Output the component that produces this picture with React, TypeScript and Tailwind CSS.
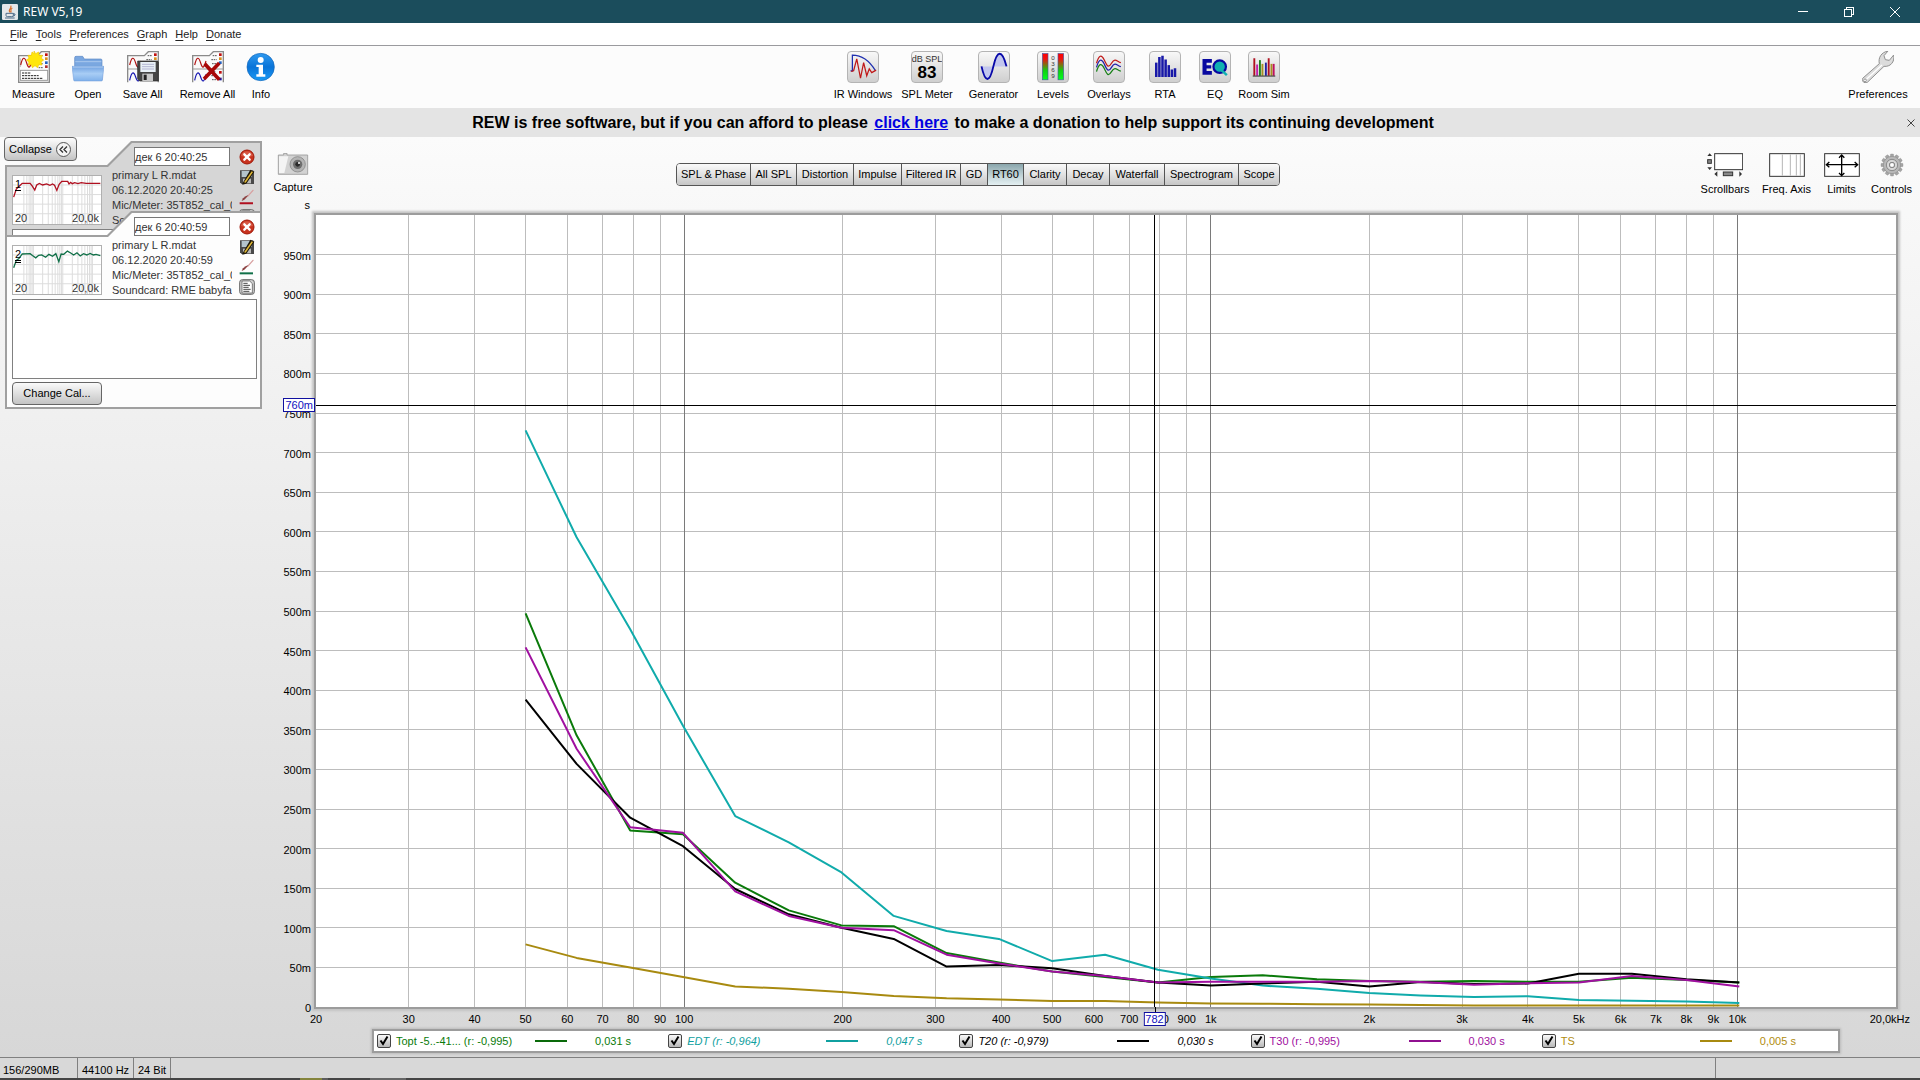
import React from "react";

const X_MIN = Math.log10(20);
const xPct = (f: number) => ((Math.log10(f) - X_MIN) / 3) * 100;
const yPct = (ms: number) => 100 - ms / 10;
const px = (f: number) => xPct(f) * 15.8;
const py = (ms: number) => yPct(ms) * 7.92;
const snap = (v: number) => Math.floor(v) + 0.5;

const FREQS = [
  50, 62.5, 79, 99.5, 125, 158, 199, 250, 315, 396, 500, 630, 794, 1000, 1255, 1590, 2000, 2500, 3160, 4000, 5000, 6300,
  8000, 10080,
];

const SERIES = [
  {
    color: "#a88a10",
    data: [79, 62, 50, 38, 26, 23, 19, 14, 11, 9.5, 7.5, 7.5, 5.5, 4.5, 4, 3.5, 3, 2.5, 2, 2, 2, 2, 2, 2],
  },
  {
    color: "#0a7a0a",
    data: [497, 343, 223, 218, 157, 122, 103, 102, 68, 56, 45, 38, 31, 38, 40, 35, 33, 32, 33, 32, 32, 37, 34, 31],
  },
  {
    color: "#10abab",
    data: [728, 593, 477, 355, 241, 208, 170, 115, 96, 86, 58, 66, 47, 36, 27, 23, 17.5, 14.5, 12.5, 13.5, 9, 8, 7, 5],
  },
  {
    color: "#000000",
    data: [388, 307, 239, 203, 149, 117, 100, 86, 51, 53, 49, 39, 31, 27, 29.5, 32, 26, 31.5, 29, 29.5, 42, 42, 35, 31],
  },
  {
    color: "#a010a0",
    data: [454, 326, 227, 220, 146, 115, 100, 97, 66, 55, 45, 39, 31, 32, 32, 32, 33, 31.5, 28, 30, 31, 39, 34, 26],
  },
];

const X_TICKS: [number, string][] = [
  [20, "20"], [30, "30"], [40, "40"], [50, "50"], [60, "60"], [70, "70"], [80, "80"], [90, "90"], [100, "100"],
  [200, "200"], [300, "300"], [400, "400"], [500, "500"], [600, "600"], [700, "700"], [800, "800"], [900, "900"],
  [1000, "1k"], [2000, "2k"], [3000, "3k"], [4000, "4k"], [5000, "5k"], [6000, "6k"], [7000, "7k"], [8000, "8k"],
  [9000, "9k"], [10000, "10k"],
];

const Y_TICKS = Array.from({ length: 20 }, (_, i) => i * 50);
const CURSOR_X = 782;
const CURSOR_Y = 760;

/* ---------- toolbar icons ---------- */

function MeasureSheet() {
  return (
    <>
      <path d="M2 14H58L70 2H94V94H2Z" fill="#fafafa" stroke="#8a8a8a" strokeWidth="4" />
      <path d="M7 48V22" stroke="#999" strokeWidth="2" />
      <path d="M8 42C14 16 20 16 26 36S36 50 42 30" fill="none" stroke="#b01010" strokeWidth="3.5" />
      <path d="M64 14h10M62 26h14M62 38h12M62 50h13" stroke="#333" strokeWidth="2.5" strokeDasharray="5 2" />
      <rect x="81" y="7" width="8" height="8" fill="#c01010" />
      <rect x="81" y="19" width="8" height="8" fill="#d89020" />
      <rect x="81" y="31" width="8" height="8" fill="#2060c0" />
      <rect x="81" y="43" width="8" height="8" fill="#b03030" />
    </>
  );
}

function MeasureIcon() {
  return (
    <svg viewBox="0 0 96 96" className="size-8">
      <MeasureSheet />
      <rect x="7" y="58" width="82" height="30" fill="#fff" stroke="#999" strokeWidth="3" />
      <path d="M12 66h26M12 74h50M12 82h62" stroke="#222" strokeWidth="3" strokeDasharray="7 2" />
      <path
        d="M48 0l5 8 9-5 1 10 10 0-3 9 7 5-8 6 3 9-10-1-3 9-8-6-8 6-3-9-9 1 2-9-8-6 8-5-3-9h10l2-10 8 5z"
        fill="#ffe60a"
        stroke="#f2c800"
        strokeWidth="2"
      />
    </svg>
  );
}

function OpenIcon() {
  return (
    <svg viewBox="0 0 96 96" className="size-8">
      <defs>
        <linearGradient id="folderFront" x1="0" y1="0" x2="0" y2="1">
          <stop offset="0" stopColor="#6fa0e0" />
          <stop offset="0.5" stopColor="#a8cdf5" />
          <stop offset="1" stopColor="#7fb0ea" />
        </linearGradient>
      </defs>
      <path d="M8 88V20Q8 16 12 16H32L37 24H86Q90 24 90 28V88Z" fill="#7aa7e0" stroke="#5c88c4" strokeWidth="2" />
      <path d="M10 32H88" stroke="#a9c8ee" strokeWidth="3" />
      <path d="M0 46H96L91 88Q91 90 88 90H8Q5 90 5 87Z" fill="url(#folderFront)" stroke="#6c98d8" strokeWidth="1.5" />
      <path d="M2 48H94" stroke="#d6e8fc" strokeWidth="2" />
    </svg>
  );
}

function DoubleSheet() {
  return (
    <>
      <path d="M2 94V14H52L64 2H94V94" fill="#fafafa" stroke="#8a8a8a" strokeWidth="4" />
      <path d="M2 54H94" stroke="#999" strokeWidth="3" />
      <path d="M8 42C14 16 20 16 26 36S36 50 42 30" fill="none" stroke="#b01010" strokeWidth="3.5" />
      <path d="M8 88C14 60 20 60 26 78S36 94 42 70" fill="none" stroke="#1515b0" strokeWidth="3.5" />
      <path d="M62 14h12M58 26h16M60 38h14M58 62h14M58 74h14M60 86h12" stroke="#333" strokeWidth="2.5" strokeDasharray="5 2" />
      <rect x="81" y="7" width="8" height="8" fill="#c01010" />
      <rect x="81" y="19" width="8" height="8" fill="#d89020" />
      <rect x="81" y="31" width="8" height="8" fill="#2060c0" />
      <rect x="81" y="60" width="8" height="8" fill="#c01010" />
      <rect x="81" y="80" width="8" height="8" fill="#1515a0" />
    </>
  );
}

function SaveAllIcon() {
  return (
    <svg viewBox="0 0 96 96" className="size-8">
      <DoubleSheet />
      <path d="M32 30H92L94 34V90H38L32 84Z" fill="#454545" stroke="#222" strokeWidth="2" />
      <rect x="40" y="33" width="46" height="30" fill="#e8f0f6" />
      <path d="M45 40h36M45 47h36M45 54h36" stroke="#aac" strokeWidth="2.5" />
      <rect x="46" y="68" width="32" height="22" fill="#c9c9c9" />
      <rect x="50" y="71" width="9" height="16" fill="#222" />
    </svg>
  );
}

function RemoveAllIcon() {
  return (
    <svg viewBox="0 0 96 96" className="size-8">
      <DoubleSheet />
      <path d="M38 38L82 86M82 36L36 84" stroke="#a80808" strokeWidth="11" />
    </svg>
  );
}

function InfoIcon() {
  return (
    <svg viewBox="0 0 96 96" className="size-8">
      <defs>
        <linearGradient id="infoBall" x1="0" y1="0" x2="0" y2="1">
          <stop offset="0" stopColor="#2f9af0" />
          <stop offset="0.5" stopColor="#0a74d8" />
          <stop offset="1" stopColor="#1a9af5" />
        </linearGradient>
      </defs>
      <circle cx="47" cy="48" r="41" fill="url(#infoBall)" stroke="#1766b8" strokeWidth="2" />
      <circle cx="47" cy="27" r="9" fill="#fff" />
      <path d="M34 41H54V70H61V77H34V70H41V48H34Z" fill="#fff" />
    </svg>
  );
}

function Tile({ children }: { children: React.ReactNode }) {
  return (
    <span className="flex size-8 shrink-0 flex-col items-center justify-center overflow-hidden rounded-[4px] border border-[#b4b4b4] bg-linear-to-b from-[#f8f8f8] to-[#cfcfcf]">
      {children}
    </span>
  );
}

function IrIcon() {
  return (
    <Tile>
      <svg viewBox="0 0 96 96" className="size-full">
        <path d="M8 60H14V10Q58 10 88 60" fill="none" stroke="#2030b0" strokeWidth="4" />
        <path d="M10 62L18 60L28 22L40 84L50 34L60 76L68 54L76 66L90 58" fill="none" stroke="#c01818" strokeWidth="4" />
      </svg>
    </Tile>
  );
}

function SplIcon() {
  return (
    <Tile>
      <span className="text-[9px] leading-3 whitespace-nowrap text-[#333]">dB SPL</span>
      <span className="text-[17px] leading-4 font-bold text-black">83</span>
    </Tile>
  );
}

function GeneratorIcon() {
  return (
    <Tile>
      <svg viewBox="0 0 96 96" className="size-full">
        <path d="M8 46C20 96 34 98 44 46ZM44 46C58 -6 76 -6 88 46Z" fill="#c2c6ee" />
        <path d="M8 46C20 100 34 100 46 46S74 -8 88 46" fill="none" stroke="#0808a8" strokeWidth="6" />
      </svg>
    </Tile>
  );
}

function LevelsIcon() {
  return (
    <Tile>
      <svg viewBox="0 0 96 96" className="size-full">
        <defs>
          <linearGradient id="meter" x1="0" y1="0" x2="0" y2="1">
            <stop offset="0" stopColor="#ff0000" />
            <stop offset="0.2" stopColor="#f01010" />
            <stop offset="0.65" stopColor="#10d010" />
            <stop offset="1" stopColor="#00ff20" />
          </linearGradient>
        </defs>
        <rect x="14" y="5" width="18" height="84" fill="url(#meter)" stroke="#4858a0" strokeWidth="2" />
        <rect x="64" y="5" width="18" height="84" fill="url(#meter)" stroke="#4858a0" strokeWidth="2" />
        <g fontFamily="Liberation Sans, sans-serif" fontSize="20" fill="#333" textAnchor="middle">
          <text x="48" y="24">0</text>
          <text x="48" y="44">3</text>
          <text x="48" y="64">6</text>
          <text x="48" y="84">9</text>
        </g>
      </svg>
    </Tile>
  );
}

function OverlaysIcon() {
  const wave = "M8 36C16 8 24 8 32 24S44 56 56 36S74 32 86 34";
  return (
    <Tile>
      <svg viewBox="0 0 96 96" className="size-full" fill="none" strokeWidth="4">
        <path d={wave} stroke="#c01818" />
        <path d={wave} stroke="#2020a8" transform="translate(0 13)" />
        <path d={wave} stroke="#188018" transform="translate(0 27)" />
      </svg>
    </Tile>
  );
}

function RtaIcon() {
  const bars = [[16, 34], [26, 16], [36, 12], [46, 24], [56, 42], [66, 56], [76, 52]];
  return (
    <Tile>
      <svg viewBox="0 0 96 96" className="size-full">
        {bars.map(([x, y]) => (
          <rect key={x} x={x} y={y} width="8" height={80 - y} fill="#1818a8" />
        ))}
      </svg>
    </Tile>
  );
}

function EqIcon() {
  return (
    <Tile>
      <svg viewBox="0 0 96 96" className="size-full">
        <path d="M8 22H38V34H21V42H36V53H21V61H38V73H8Z" fill="#0808a0" />
        <circle cx="63" cy="47" r="20" fill="#10b0b0" stroke="#0808a0" strokeWidth="7" />
        <path d="M64 54L86 74" stroke="#10b0b0" strokeWidth="8" />
      </svg>
    </Tile>
  );
}

function RoomIcon() {
  const bars: [number, number, string][] = [
    [14, 20, "#b01020"], [23, 40, "#c020b0"], [32, 26, "#208020"], [40, 38, "#a89020"],
    [51, 34, "#2020a0"], [60, 20, "#b01020"], [69, 38, "#a89020"], [76, 38, "#c01060"],
  ];
  return (
    <Tile>
      <svg viewBox="0 0 96 96" className="size-full">
        {bars.map(([x, y, c]) => (
          <rect key={x} x={x} y={y} width="6" height={76 - y} fill={c} />
        ))}
        <path d="M12 77H84" stroke="#222" strokeWidth="3" />
      </svg>
    </Tile>
  );
}

function WrenchIcon() {
  return (
    <svg viewBox="0 0 96 96" className="size-8">
      <path
        d="M2 82L52 38C48 20 58 4 78 0L66 14L70 26L82 28L95 12C99 34 84 48 66 46L16 94C6 98 -2 90 2 82Z"
        fill="#dcdcdc"
        stroke="#909090"
        strokeWidth="3"
      />
      <path d="M14 84L60 42" stroke="#fff" strokeWidth="4" />
      <circle cx="9" cy="88" r="4" fill="#fff" stroke="#777" strokeWidth="2" />
    </svg>
  );
}

function Tool({ label, icon, width }: { label: string; icon: React.ReactNode; width: string }) {
  return (
    <button type="button" className={`flex shrink-0 flex-col items-center gap-[3px] ${width}`}>
      <span className="flex h-8 justify-center">{icon}</span>
      <span className="text-[11px] leading-4 whitespace-nowrap">{label}</span>
    </button>
  );
}

/* ---------- measurement cards ---------- */

const TRACE_1 =
  "M2 66L10 41L18 33L28 23H52L58 31L66 44L72 28L80 23L90 28L102 25L112 29L120 25L126 29L133 45L140 26L148 17H166L170 25L175 20L180 24L187 21L197 24L207 21L222 23H265";
const TRACE_2 =
  "M2 68L10 45L18 39L28 25L52 24L59 30L69 37L78 29L87 28L99 35L109 26L120 32L130 24L139 49L146 25L154 26L165 16L175 22L184 28L194 21L204 31L214 24L224 28L234 23L244 28L252 26L265 30";
const THUMB_V = [33, 42, 49, 54, 58, 62, 90, 107, 119, 128, 136, 142, 147, 151, 180, 197, 209, 218, 226, 232, 237, 241];

function Thumb({ num, color, path }: { num: number; color: string; path: string }) {
  return (
    <div className="relative h-[50px] w-[90px] shrink-0 border border-[#b0b0b0] bg-white text-[11px] leading-3">
      <svg viewBox="0 0 267 150" preserveAspectRatio="none" className="size-full">
        {THUMB_V.map((x) => (
          <path key={x} d={`M${x} 0V150`} stroke="#dcdcdc" strokeWidth="3" />
        ))}
        {[28, 58, 88, 118].map((y) => (
          <path key={y} d={`M0 ${y}H267`} stroke="#dcdcdc" strokeWidth="3" />
        ))}
        <path d={path} fill="none" stroke={color} strokeWidth="4" />
      </svg>
      <span className={`absolute top-0.5 left-0.5 border-black ${num === 2 ? "border-b-3 border-double" : "border-b"}`}>
        {num}
      </span>
      <span className="absolute bottom-0 left-0.5 text-[#333]">20</span>
      <span className="absolute right-0.5 bottom-0 text-[#333]">20,0k</span>
    </div>
  );
}

function CloseBall() {
  return (
    <svg viewBox="0 0 48 48" className="size-4">
      <circle cx="24" cy="24" r="21" fill="#c8321e" stroke="#a01808" strokeWidth="3" />
      <path d="M6 20A19 19 0 0 1 42 20Q24 28 6 20Z" fill="#e0705c" opacity="0.6" />
      <path d="M16 16L32 32M32 16L16 32" stroke="#fff" strokeWidth="7" strokeLinecap="round" />
    </svg>
  );
}

function SavePen() {
  return (
    <svg viewBox="0 0 48 48" className="size-4">
      <path d="M3 4H42L45 8V45H8L3 40Z" fill="#4a4a4a" />
      <rect x="8" y="6" width="30" height="18" fill="#b4c4cc" />
      <rect x="12" y="29" width="24" height="14" fill="#bbb" />
      <path d="M10 44L34 2L46 8L22 44L10 47Z" fill="#1e1808" />
      <path d="M15 40L38 7L42 9L20 41Z" fill="#e0b838" />
    </svg>
  );
}

function Brush({ color }: { color: string }) {
  return (
    <svg viewBox="0 0 48 48" className="size-4">
      <path d="M42 4L26 22" stroke="#d8a0a0" strokeWidth="4" strokeLinecap="round" />
      <path d="M28 18L22 26L16 32L8 36L12 28L20 22Z" fill="#8a4040" />
      <path d="M2 43H42" stroke={color} strokeWidth="6" />
    </svg>
  );
}

function Notes() {
  return (
    <svg viewBox="0 0 48 48" className="size-4">
      <rect x="2" y="2" width="44" height="44" rx="8" fill="#d0d0d0" stroke="#666" strokeWidth="3" />
      <path d="M9 6H32L40 14V42H9Z" fill="#fff" stroke="#444" strokeWidth="2" />
      <path d="M13 13h13M13 19h20M13 25h16M13 31h22M13 37h18" stroke="#222" strokeWidth="2.5" />
    </svg>
  );
}

type CardProps = { num: number; name: string; date: string; color: string; path: string; active: boolean };

function MeasurementCard({ num, name, date, color, path, active }: CardProps) {
  return (
    <article
      className={`bg-[#a0a0a0] p-0.5 [clip-path:polygon(0_24px,102px_24px,126px_0,100%_0,100%_100%,0_100%)] ${
        active ? "-mt-6" : "h-[94px] overflow-hidden"
      }`}
    >
      <div
        className={`px-[5px] pt-1 pb-0.5 [clip-path:polygon(0_24px,101px_24px,125px_0,100%_0,100%_100%,0_100%)] ${
          active ? "bg-[#fdfdfd]" : "bg-[#d6d6d6]"
        }`}
      >
        <div className="flex items-start">
          <div className="pt-7">
            <Thumb num={num} color={color} path={path} />
          </div>
          <div className="ml-2.5 flex w-[120px] flex-col overflow-hidden text-[11px] leading-[15px] whitespace-nowrap text-[#333]">
            <input
              aria-label={`Measurement ${num} name`}
              defaultValue={name}
              className="mb-0.5 ml-[22px] h-[19px] w-24 border border-[#777] bg-white text-[11px] text-[#333]"
            />
            <span>primary L R.mdat</span>
            <span>{date}</span>
            <span>Mic/Meter: 35T852_cal_0</span>
            <span>Soundcard: RME babyfa</span>
          </div>
          <div className="ml-[7px] flex flex-col gap-1 pt-0.5">
            <button type="button" aria-label="Delete"><CloseBall /></button>
            <button type="button" aria-label="Save"><SavePen /></button>
            <button type="button" aria-label="Trace colour"><Brush color={color} /></button>
            <button type="button" aria-label="Notes"><Notes /></button>
          </div>
        </div>
        <textarea
          aria-label={`Notes ${num}`}
          className="mt-px block h-20 w-[245px] resize-none border border-[#808080] bg-white"
        />
        <button
          type="button"
          className="mt-[3px] h-[23px] w-[90px] rounded-[4px] border border-[#666] bg-linear-to-b from-[#fafafa] to-[#c4c4c4] text-[11px]"
        >
          Change Cal...
        </button>
      </div>
    </article>
  );
}

/* ---------- graph controls ---------- */

const TABS: [string, string][] = [
  ["SPL & Phase", "w-[73px]"], ["All SPL", "w-[46px]"], ["Distortion", "w-[57px]"], ["Impulse", "w-12"],
  ["Filtered IR", "w-[59px]"], ["GD", "w-[27px]"], ["RT60", "w-9"], ["Clarity", "w-[43px]"], ["Decay", "w-[43px]"],
  ["Waterfall", "w-[55px]"], ["Spectrogram", "w-[74px]"], ["Scope", "w-[41px]"],
];

function CaptureIcon() {
  return (
    <svg viewBox="0 0 96 66" className="h-[22px] w-8">
      <path d="M4 6H20V1H30V6H92V64H4Z" fill="#d2d2d2" stroke="#999" strokeWidth="2.5" />
      <path d="M6 10H34L22 60H6Z" fill="#f4f4f4" />
      <circle cx="62" cy="34" r="23" fill="#b4b4b4" stroke="#888" strokeWidth="2.5" />
      <circle cx="62" cy="34" r="14" fill="#6e6e6e" />
      <circle cx="62" cy="34" r="7" fill="#2a2a2a" />
      <circle cx="66" cy="30" r="3" fill="#fff" />
    </svg>
  );
}

function ScrollbarsIcon() {
  return (
    <svg viewBox="0 0 108 72" className="h-6 w-9">
      <rect x="23" y="2" width="84" height="48" fill="#fff" stroke="#333" strokeWidth="3" />
      <path d="M8 1L15 9H1ZM8 51L15 43H1ZM22 63L31 55V71ZM105 63L97 55V71Z" fill="#333" />
      <rect x="2" y="20" width="11" height="11" fill="#888" stroke="#333" strokeWidth="3" />
      <rect x="49" y="57" width="28" height="11" fill="#888" stroke="#333" strokeWidth="3" />
    </svg>
  );
}

function FreqAxisIcon() {
  return (
    <svg viewBox="0 0 108 72" className="h-6 w-9">
      <rect x="2" y="2" width="104" height="68" fill="#fff" stroke="#333" strokeWidth="3" />
      <path d="M40 4V68M64 4V68M82 4V68M94 4V68" stroke="#b5b5b5" strokeWidth="3" />
    </svg>
  );
}

function LimitsIcon() {
  return (
    <svg viewBox="0 0 108 72" className="h-6 w-9">
      <rect x="2" y="2" width="104" height="68" fill="#fff" stroke="#333" strokeWidth="3" />
      <path
        d="M8 35H100M53 8V66M16 27L7 35L16 43M92 27L101 35L92 43M45 14L53 6L61 14M45 60L53 68L61 60"
        fill="none"
        stroke="#000"
        strokeWidth="4"
      />
    </svg>
  );
}

function GearIcon() {
  return (
    <svg viewBox="0 0 72 72" className="size-6">
      {Array.from({ length: 12 }, (_, i) => (
        <rect key={i} x="31" y="3" width="10" height="14" rx="2" fill="#a5a5a5" stroke="#888" transform={`rotate(${i * 30} 36 36)`} />
      ))}
      <circle cx="36" cy="36" r="26" fill="#b8b8b8" stroke="#8c8c8c" strokeWidth="2" />
      <circle cx="36" cy="36" r="17" fill="#d6d6d6" stroke="#8a8a8a" strokeWidth="3" />
      <rect x="29" y="29" width="14" height="14" rx="4" fill="#fff" stroke="#777" strokeWidth="3" />
    </svg>
  );
}

function GraphTool({ label, icon, width }: { label: string; icon: React.ReactNode; width: string }) {
  return (
    <button type="button" className={`flex flex-col items-center gap-1 ${width}`}>
      {icon}
      <span className="text-[11px] leading-4 whitespace-nowrap">{label}</span>
    </button>
  );
}

/* ---------- plot ---------- */

function Plot() {
  return (
    <svg viewBox="0 0 1580 792" preserveAspectRatio="none" className="absolute inset-0 size-full bg-white">
      <g shapeRendering="crispEdges">
        {Y_TICKS.slice(1).map((t) => (
          <line key={t} x1="0" x2="1580" y1={snap(py(t))} y2={snap(py(t))} stroke="#bdbdbd" />
        ))}
        {X_TICKS.slice(1).map(([f]) => (
          <line
            key={f}
            x1={snap(px(f))}
            x2={snap(px(f))}
            y1="0"
            y2="792"
            stroke={f === 100 || f === 1000 || f === 10000 ? "#7a7a7a" : "#bdbdbd"}
          />
        ))}
      </g>
      {SERIES.map((s) => (
        <polyline
          key={s.color}
          points={s.data.map((v, i) => `${px(FREQS[i]).toFixed(1)},${py(v).toFixed(1)}`).join(" ")}
          fill="none"
          stroke={s.color}
          strokeWidth="2"
          strokeLinejoin="round"
        />
      ))}
      <g shapeRendering="crispEdges" stroke="#000">
        <line x1="0" x2="1580" y1={snap(py(CURSOR_Y))} y2={snap(py(CURSOR_Y))} />
        <line x1={snap(px(CURSOR_X))} x2={snap(px(CURSOR_X))} y1="0" y2="792" />
      </g>
    </svg>
  );
}

const LEGEND = [
  { label: "Topt -5..-41... (r: -0,995)", value: "0,031 s", text: "text-[#0a7a0a]", line: "bg-[#0a6a0a]" },
  { label: "EDT (r: -0,964)", value: "0,047 s", text: "text-[#10a0a0] italic", line: "bg-[#10a0a0]" },
  { label: "T20 (r: -0,979)", value: "0,030 s", text: "text-black italic", line: "bg-black" },
  { label: "T30 (r: -0,995)", value: "0,030 s", text: "text-[#a010a0]", line: "bg-[#901090]" },
  { label: "TS", value: "0,005 s", text: "text-[#b08c10]", line: "bg-[#a88a10]" },
];

function Legend() {
  return (
    <div className="mx-[58px] grid h-5 grid-cols-5 bg-white pr-2 text-[11px] shadow-[0_0_0_2px_#9c9c9c,0_0_2px_3px_#bcbcbc]">
      {LEGEND.map((l, i) => (
        <div key={i} className={`flex items-center pl-[3px] whitespace-nowrap ${l.text}`}>
          <label className="flex w-[158px] items-center gap-[5px]">
            <span className="grid size-3.5 shrink-0 place-items-center">
              <input
                type="checkbox"
                defaultChecked
                className="peer col-start-1 row-start-1 size-3.5 appearance-none rounded-[2px] border border-[#444] bg-linear-to-b from-[#fafafa] to-[#b8b8b8]"
              />
              <svg viewBox="0 0 14 14" className="pointer-events-none invisible col-start-1 row-start-1 size-3.5 peer-checked:visible">
                <path d="M3.5 6.5L6 10L10.5 2.5" fill="none" stroke="#000" strokeWidth="2" />
              </svg>
            </span>
            {l.label}
          </label>
          <span className={`h-0.5 w-8 ${l.line}`} />
          <span className="ml-7">{l.value}</span>
        </div>
      ))}
    </div>
  );
}

export default function App() {
  return (
    <div className="flex h-screen flex-col overflow-hidden font-['Liberation_Sans',Arial,sans-serif] text-black">
      <header className="flex h-[23px] shrink-0 items-center bg-[#1b4d5c] pr-0.5 font-['Noto_Sans',sans-serif] text-white">
        <svg viewBox="0 0 48 48" className="ml-0.5 size-4">
          <rect x="0" y="0" width="48" height="48" rx="4" fill="#e4e8ea" />
          <path d="M26 5C32 13 16 15 24 25M31 12C22 17 30 20 26 26" fill="none" stroke="#d8702c" strokeWidth="3.5" />
          <path d="M12 28H34V34Q34 38 29 38H17Q12 38 12 34ZM34 29Q41 29 39 33T33 36M9 42H38" fill="none" stroke="#4c6c88" strokeWidth="3" />
        </svg>
        <h1 className="ml-[5px] text-[12px] leading-4">REW V5,19</h1>
        <div className="ml-auto flex">
          <button type="button" aria-label="Minimize" className="grid h-5 w-[46px] place-items-center">
            <span className="h-px w-2.5 bg-white" />
          </button>
          <button type="button" aria-label="Restore" className="grid h-5 w-[46px] place-items-center">
            <svg viewBox="0 0 10 10" className="size-2.5" fill="none" stroke="#fff" shapeRendering="crispEdges">
              <path d="M.5 2.5H7.5V9.5H.5ZM2.5 2.5V.5H9.5V7.5H7.5" />
            </svg>
          </button>
          <button type="button" aria-label="Close" className="grid h-5 w-[46px] place-items-center">
            <svg viewBox="0 0 10 10" className="size-2.5" stroke="#fff">
              <path d="M0 0L10 10M10 0L0 10" />
            </svg>
          </button>
        </div>
      </header>

      <nav className="flex h-[23px] shrink-0 items-center gap-2 border-b border-[#9a9a9e] bg-white pl-2.5 text-[11px] text-[#222]">
        {["File", "Tools", "Preferences", "Graph", "Help", "Donate"].map((m) => (
          <button type="button" key={m}>
            <span className="underline underline-offset-2">{m[0]}</span>
            {m.slice(1)}
          </button>
        ))}
      </nav>

      <div className="flex h-[62px] shrink-0 items-start justify-between bg-[#fcfcfc] pt-[5px] pr-3 pl-2.5">
        <div className="flex">
          <Tool label="Measure" icon={<MeasureIcon />} width="w-[47px]" />
          <Tool label="Open" icon={<OpenIcon />} width="w-[62px]" />
          <Tool label="Save All" icon={<SaveAllIcon />} width="w-[47px]" />
          <Tool label="Remove All" icon={<RemoveAllIcon />} width="w-[83px]" />
          <Tool label="Info" icon={<InfoIcon />} width="w-6" />
        </div>
        <div className="flex">
          <Tool label="IR Windows" icon={<IrIcon />} width="w-[62px]" />
          <Tool label="SPL Meter" icon={<SplIcon />} width="w-[66px]" />
          <Tool label="Generator" icon={<GeneratorIcon />} width="w-[67px]" />
          <Tool label="Levels" icon={<LevelsIcon />} width="w-[52px]" />
          <Tool label="Overlays" icon={<OverlaysIcon />} width="w-[60px]" />
          <Tool label="RTA" icon={<RtaIcon />} width="w-[52px]" />
          <Tool label="EQ" icon={<EqIcon />} width="w-12" />
          <Tool label="Room Sim" icon={<RoomIcon />} width="w-[50px]" />
        </div>
        <Tool label="Preferences" icon={<WrenchIcon />} width="w-[60px]" />
      </div>

      <div className="flex h-[29px] shrink-0 items-center bg-[#e4e4e4] pr-1">
        <p className="flex-1 pt-px text-center text-[16px] leading-5 font-bold">
          REW is free software, but if you can afford to please{" "}
          <a href="#donate" className="mx-0.5 text-[#0000e0] underline">click here</a>{" "}
          to make a donation to help support its continuing development
        </p>
        <button type="button" aria-label="Dismiss" className="p-px">
          <svg viewBox="0 0 8 8" className="size-2" stroke="#444">
            <path d="M.5 .5L7.5 7.5M7.5 .5L.5 7.5" />
          </svg>
        </button>
      </div>

      <main className="flex min-h-0 flex-1 bg-linear-to-b from-[#fbfbfb] to-[#d7d7d7]">
        <aside className="w-[262px] shrink-0">
          <div className="-mb-5 pl-1">
            <button
              type="button"
              className="flex h-6 w-[73px] items-center justify-between rounded-[4px] border border-[#666] bg-linear-to-b from-[#fdfdfd] to-[#c4c4c4] pr-[5px] pl-1 text-[11px]"
            >
              Collapse
              <svg viewBox="0 0 15 15" className="size-[15px]" fill="none" stroke="#333">
                <circle cx="7.5" cy="7.5" r="7" fill="#f4f4f4" stroke="#555" />
                <path d="M7 4.5L4 7.5L7 10.5M11 4.5L8 7.5L11 10.5" strokeWidth="1.3" />
              </svg>
            </button>
          </div>
          <div className="ml-[5px]">
            <MeasurementCard num={1} name="дек 6 20:40:25" date="06.12.2020 20:40:25" color="#b01020" path={TRACE_1} active={false} />
            <MeasurementCard num={2} name="дек 6 20:40:59" date="06.12.2020 20:40:59" color="#107048" path={TRACE_2} active />
          </div>
        </aside>

        <section className="flex min-w-0 flex-1 flex-col pb-[5px]">
          <div className="flex h-[78px] shrink-0 items-start">
            <div className="pt-4">
              <GraphTool label="Capture" icon={<CaptureIcon />} width="w-[62px]" />
              <p className="pr-[14px] text-right text-[11px] leading-5">s</p>
            </div>
            <div className="flex flex-1 justify-center pt-[26px] pr-[62px]">
              <div className="flex h-[23px] overflow-hidden rounded-[4px] border border-[#555] text-[11px]">
                {TABS.map(([t, w]) => (
                  <button
                    type="button"
                    key={t}
                    className={`shrink-0 border-l border-[#555] whitespace-nowrap first:border-l-0 ${w} ${
                      t === "RT60"
                        ? "bg-linear-to-b from-[#8aa6ac] via-[#bccfd3] to-[#e4f0f2]"
                        : "bg-linear-to-b from-[#fafafa] via-[#e2e2e2] to-[#c6c6c6]"
                    }`}
                  >
                    {t}
                  </button>
                ))}
              </div>
            </div>
            <div className="flex pt-4 pr-[3px]">
              <GraphTool label="Scrollbars" icon={<ScrollbarsIcon />} width="w-[62px]" />
              <GraphTool label="Freq. Axis" icon={<FreqAxisIcon />} width="w-[61px]" />
              <GraphTool label="Limits" icon={<LimitsIcon />} width="w-[49px]" />
              <GraphTool label="Controls" icon={<GearIcon />} width="w-[51px]" />
            </div>
          </div>

          <div className="flex min-h-0 flex-1 flex-col pr-6 pl-[54px] text-[11px] leading-3">
            <div className="relative flex-1 shadow-[0_0_0_2px_#9c9c9c,0_0_2px_4px_#c4c4c4]">
              <Plot />
              {Y_TICKS.map((t) => (
                <span
                  key={t}
                  className="absolute right-full mr-[5px] -translate-y-1/2 pt-px"
                  style={{ top: `${yPct(t)}%` }}
                >
                  {t === 0 ? "0" : `${t}m`}
                </span>
              ))}
              <span
                className="absolute right-full mr-px -translate-y-1/2 border border-[#1010a0] bg-white px-px text-[#1010c0]"
                style={{ top: `${yPct(CURSOR_Y)}%` }}
              >
                {CURSOR_Y}m
              </span>
            </div>
            <div className="relative h-6 shrink-0">
              {X_TICKS.map(([f, l]) => (
                <span key={f} className="absolute top-1.5 -translate-x-1/2" style={{ left: `${xPct(f)}%` }}>
                  {l}
                </span>
              ))}
              <span className="absolute top-1.5 -right-3.5">20,0kHz</span>
              <span
                className="absolute top-[5px] -translate-x-1/2 border border-[#1010a0] bg-white px-px text-[#1010c0]"
                style={{ left: `${xPct(CURSOR_X)}%` }}
              >
                {CURSOR_X}
              </span>
              <span className="absolute top-0 h-[5px] w-px bg-black" style={{ left: `${xPct(CURSOR_X)}%` }} />
            </div>
            <Legend />
            <div className="h-px" />
          </div>
        </section>
      </main>

      <footer className="shrink-0">
        <div className="flex h-[21px] border-t border-[#808080] bg-[#d8d8d8] text-[11px] leading-6">
          <span className="w-[78px] border-r border-[#808080] pl-[3px]">156/290MB</span>
          <span className="w-14 border-r border-[#808080] pl-1">44100 Hz</span>
          <span className="w-[37px] border-r border-[#808080] pl-1">24 Bit</span>
          <span className="flex-1" />
          <span className="w-[205px] border-l border-[#808080]" />
        </div>
        <div className="flex h-0.5 bg-[#454545]">
          <span className="ml-[300px] w-[22px] bg-[#84843c]" />
          <span className="w-1.5 bg-[#5c5c5c]" />
          <span className="ml-[42px] w-9 bg-[#666]" />
        </div>
      </footer>
    </div>
  );
}
